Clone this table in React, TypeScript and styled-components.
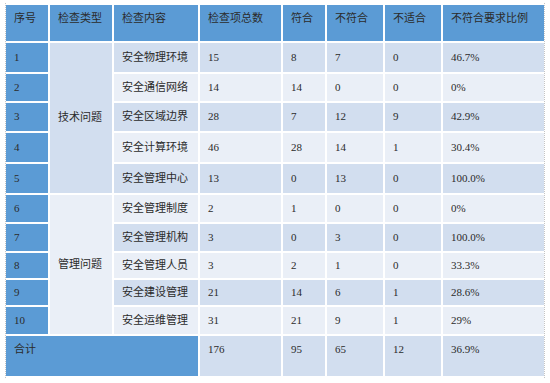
import React from 'react';
import styled, { createGlobalStyle } from 'styled-components';

const GlobalStyle = createGlobalStyle`
  body {
    margin: 0;
    background: #fff;
    font-family: "Liberation Serif", "Noto Sans CJK SC", serif;
  }
`;

const Frame = styled.div`
  display: inline-block;
  margin: 3px 0 0 5px;
  border-left: 1px dotted #c4c4c4;
  border-right: 1px dotted #c4c4c4;
`;

const Table = styled.table`
  border-collapse: separate;
  border-spacing: 2px;
  table-layout: fixed;
  width: 542px;
  margin: 0 -2px;
  font-size: 11px;
  line-height: 14px;
  color: #2b2b2b;
`;

const Row = styled.tr<{ $h: number }>`
  height: ${(p) => p.$h}px;
`;

type Tone = 'head' | 'dark' | 'light';

const tones: Record<Tone, string> = {
  head: '#5b9bd5',
  dark: '#d2deef',
  light: '#eaeff7',
};

const Cell = styled.td<{ $tone: Tone; $top?: boolean }>`
  background: ${(p) => tones[p.$tone]};
  padding: ${(p) => (p.$top ? '6px 8px 0 8px' : '0 8px 2px 8px')};
  vertical-align: ${(p) => (p.$top ? 'top' : 'middle')};
  text-align: left;
  font-weight: normal;
  white-space: nowrap;
  overflow: hidden;
`;

const HeadCell = styled(Cell).attrs({ as: 'th' })``;

const widths = [42, 62, 84, 81, 42, 56, 56, 101];
const headers = ['序号', '检查类型', '检查内容', '检查项总数', '符合', '不符合', '不适合', '不符合要求比例'];
const rowHeights = [29, 27, 28, 29, 29, 27, 27, 25, 25, 27];

const rows = [
  ['安全物理环境', '15', '8', '7', '0', '46.7%'],
  ['安全通信网络', '14', '14', '0', '0', '0%'],
  ['安全区域边界', '28', '7', '12', '9', '42.9%'],
  ['安全计算环境', '46', '28', '14', '1', '30.4%'],
  ['安全管理中心', '13', '0', '13', '0', '100.0%'],
  ['安全管理制度', '2', '1', '0', '0', '0%'],
  ['安全管理机构', '3', '0', '3', '0', '100.0%'],
  ['安全管理人员', '3', '2', '1', '0', '33.3%'],
  ['安全建设管理', '21', '14', '6', '1', '28.6%'],
  ['安全运维管理', '31', '21', '9', '1', '29%'],
];

const groups: Record<number, { label: string; tone: Tone }> = {
  0: { label: '技术问题', tone: 'dark' },
  5: { label: '管理问题', tone: 'light' },
};

const App: React.FC = () => {
  return (
    <>
      <GlobalStyle />
      <Frame>
        <Table>
          <colgroup>
            {widths.map((w, i) => (
              <col key={i} style={{ width: w }} />
            ))}
          </colgroup>
          <thead>
            <Row $h={36}>
              {headers.map((h) => (
                <HeadCell key={h} $tone="head" $top>
                  {h}
                </HeadCell>
              ))}
            </Row>
          </thead>
          <tbody>
            {rows.map((r, i) => {
              const tone: Tone = i % 2 === 0 ? 'dark' : 'light';
              const group = groups[i];
              return (
                <Row key={i} $h={rowHeights[i]}>
                  <Cell $tone="head">{i + 1}</Cell>
                  {group && (
                    <Cell $tone={group.tone} rowSpan={5}>
                      {group.label}
                    </Cell>
                  )}
                  {r.map((v, j) => (
                    <Cell key={j} $tone={tone}>
                      {v}
                    </Cell>
                  ))}
                </Row>
              );
            })}
            <Row $h={40}>
              <Cell $tone="head" colSpan={3} $top>
                合计
              </Cell>
              {['176', '95', '65', '12', '36.9%'].map((v) => (
                <Cell key={v} $tone="dark" $top>
                  {v}
                </Cell>
              ))}
            </Row>
          </tbody>
        </Table>
      </Frame>
    </>
  );
};

export default App;
